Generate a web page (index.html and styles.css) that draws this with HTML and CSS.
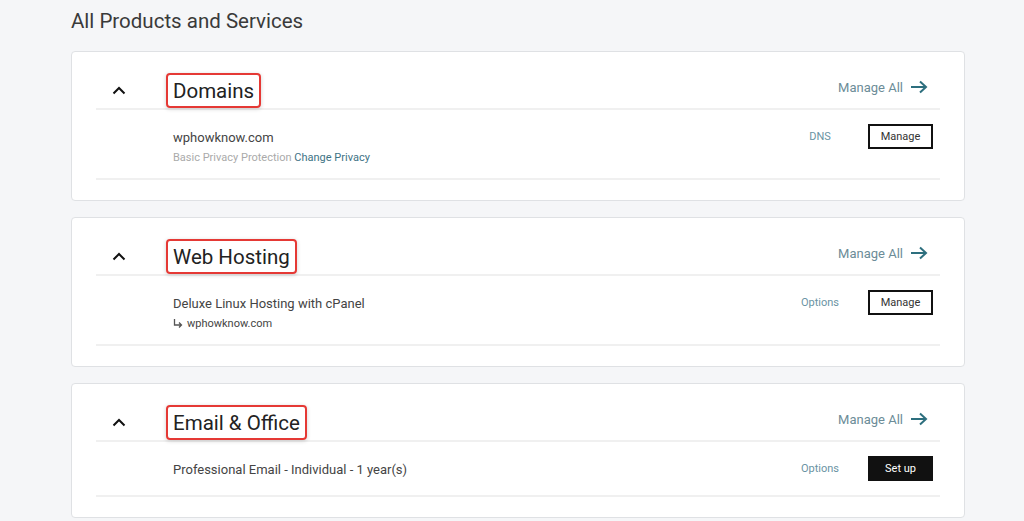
FILE: index.html
```html
<!DOCTYPE html>
<html lang="en">
<head>
<meta charset="utf-8">
<title>All Products and Services</title>
<link rel="stylesheet" href="styles.css">
</head>
<body>
<div class="page">
	<h1 class="page-title">All Products and Services</h1>

	<!-- Domains -->
	<div class="card">
		<div class="card-head">
			<span class="toggle"><svg width="14" height="9" viewBox="0 0 14 9"><polyline points="1.5,7.5 7,2 12.5,7.5" fill="none" stroke="#111" stroke-width="2"/></svg></span>
			<h2 class="card-title"><span>Domains</span></h2>
			<a class="manage-all" href="#">Manage All <svg width="18" height="14" viewBox="0 0 18 14"><path d="M1 7h15M10 1.5l6 5.5-6 5.5" fill="none" stroke="#2d6f7e" stroke-width="2"/></svg></a>
		</div>
		<div class="item">
			<div class="item-info">
				<div class="item-name">wphowknow.com</div>
				<div class="item-sub">Basic Privacy Protection <a href="#">Change Privacy</a></div>
			</div>
			<a class="item-link" href="#">DNS</a>
			<a class="btn" href="#">Manage</a>
		</div>
	</div>

	<!-- Web Hosting -->
	<div class="card">
		<div class="card-head">
			<span class="toggle"><svg width="14" height="9" viewBox="0 0 14 9"><polyline points="1.5,7.5 7,2 12.5,7.5" fill="none" stroke="#111" stroke-width="2"/></svg></span>
			<h2 class="card-title"><span>Web Hosting</span></h2>
			<a class="manage-all" href="#">Manage All <svg width="18" height="14" viewBox="0 0 18 14"><path d="M1 7h15M10 1.5l6 5.5-6 5.5" fill="none" stroke="#2d6f7e" stroke-width="2"/></svg></a>
		</div>
		<div class="item">
			<div class="item-info">
				<div class="item-name">Deluxe Linux Hosting with cPanel</div>
				<div class="item-domain"><svg width="10" height="9" viewBox="0 0 10 9"><path d="M1.5 0v6h7M6 3.5l2.5 2.5L6 8.5" fill="none" stroke="#555" stroke-width="1.3"/></svg>wphowknow.com</div>
			</div>
			<a class="item-link" href="#">Options</a>
			<a class="btn" href="#">Manage</a>
		</div>
	</div>

	<!-- Email & Office -->
	<div class="card">
		<div class="card-head">
			<span class="toggle"><svg width="14" height="9" viewBox="0 0 14 9"><polyline points="1.5,7.5 7,2 12.5,7.5" fill="none" stroke="#111" stroke-width="2"/></svg></span>
			<h2 class="card-title"><span>Email &amp; Office</span></h2>
			<a class="manage-all" href="#">Manage All <svg width="18" height="14" viewBox="0 0 18 14"><path d="M1 7h15M10 1.5l6 5.5-6 5.5" fill="none" stroke="#2d6f7e" stroke-width="2"/></svg></a>
		</div>
		<div class="item">
			<div class="item-info">
				<div class="item-name">Professional Email - Individual - 1 year(s)</div>
			</div>
			<a class="item-link" href="#">Options</a>
			<a class="btn btn-dark" href="#">Set up</a>
		</div>
	</div>
</div>
</body>
</html>
```

FILE: styles.css
```css
*{margin:0;padding:0;box-sizing:border-box;}
body{background:#f5f6f8;font-family:Roboto,"Noto Sans",Arial,sans-serif;color:#333;}
a{text-decoration:none;}
.page{width:965px;padding:9px 0 0 71px;}
.page-title{font-size:20.5px;line-height:24px;font-weight:400;color:#3a3a3a;margin-bottom:18px;}
.card{background:#fff;border:1px solid #dfe1e4;border-radius:4px;padding:0 24px 20px;margin-bottom:16px;}
.card-head{display:flex;align-items:center;height:58px;padding-top:20px;border-bottom:2px solid #f0f0f0;}
.toggle{width:70px;padding-left:16px;display:flex;align-items:center;height:34px;}
.card-title{font-size:20.5px;font-weight:400;color:#222;flex:1;}
.card-title span{display:inline-block;border:2px solid #e53935;border-radius:4px;padding:1px 5px 0;line-height:30px;box-shadow:0 1px 4px rgba(0,0,0,.18);}
.manage-all{display:flex;align-items:center;gap:7px;font-size:13px;color:#6c8c98;margin-right:12px;margin-top:-6px;}
.item{display:flex;align-items:flex-start;padding:14px 7px 13px 77px;border-bottom:2px solid #f0f0f0;}
.item-info{flex:1;padding-top:2px;}
.item-name{font-size:13px;line-height:24px;color:#444;}
.item-sub{font-size:11px;line-height:15px;color:#aaa;}
.item-sub a{color:#3e7385;}
.item-domain{font-size:11px;line-height:15px;color:#444;display:flex;align-items:center;gap:4px;}
.item-link{width:60px;text-align:center;font-size:11px;line-height:25px;color:#6a93a3;margin-right:18px;}
.btn{display:block;width:65px;height:25px;line-height:21px;text-align:center;border:2px solid #111;font-size:11px;color:#333;}
.btn-dark{background:#111;color:#fff;}
```
